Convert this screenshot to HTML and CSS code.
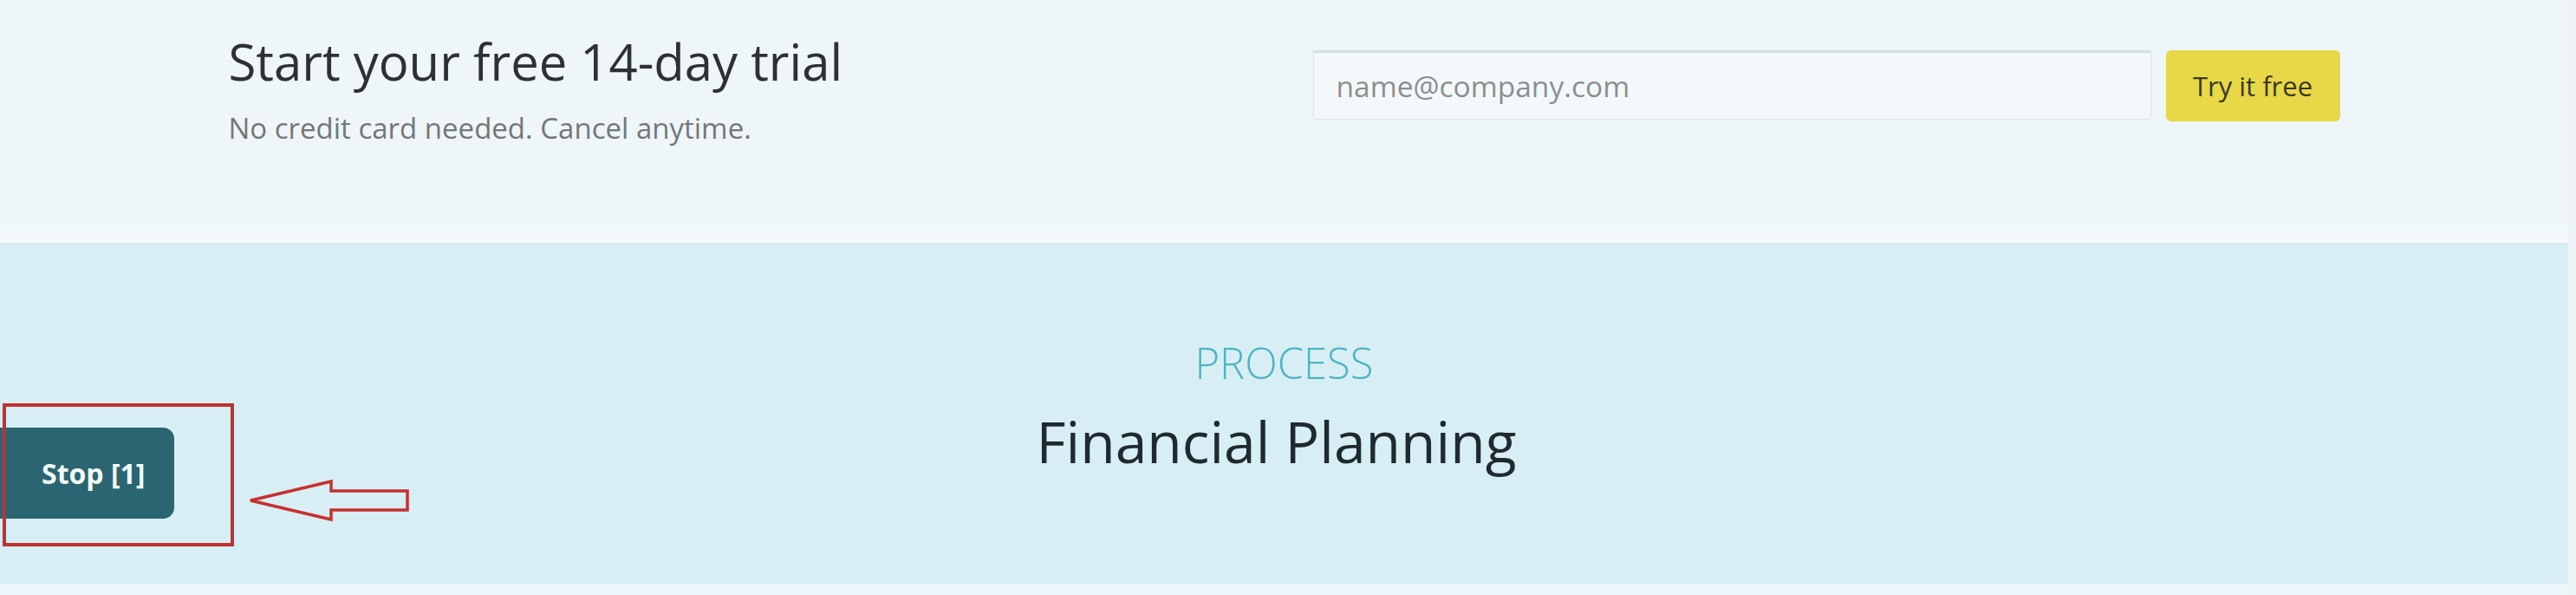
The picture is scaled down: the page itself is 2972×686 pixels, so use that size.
FILE: index.html
```html
<!DOCTYPE html>
<html lang="en">
<head>
<meta charset="utf-8">
<title>Start your free 14-day trial</title>
<link rel="stylesheet" href="styles.css">
</head>
<body>
  <div class="page">
    <section class="trial">
      <div class="trial-inner">
        <div class="trial-text">
          <h2 class="trial-title">Start your free 14-day trial</h2>
          <p class="trial-sub">No credit card needed. Cancel anytime.</p>
        </div>
        <form class="trial-form">
          <input class="trial-input" type="email" placeholder="name@company.com">
          <button class="trial-btn" type="button">Try it free</button>
        </form>
      </div>
    </section>
    <section class="process">
      <div class="process-label">PROCESS</div>
      <h2 class="process-title">Financial Planning</h2>
    </section>
    <div class="bottom-strip"></div>
  </div>
  <div class="edge"></div>

  <button class="stop-btn" type="button">Stop [1]</button>
  <div class="annot-box"></div>
  <svg class="annot-arrow" width="190" height="52" viewBox="0 0 190 52" xmlns="http://www.w3.org/2000/svg">
    <polygon points="3,25 96,3 96,14 184,14 184,36 96,36 96,47" fill="none" stroke="#c8302f" stroke-width="3.5" stroke-linejoin="miter"/>
  </svg>
</body>
</html>
```

FILE: styles.css
```css
html, body {
  margin: 0;
  padding: 0;
}

body {
  position: relative;
  display: flex;
  width: 2972px;
  height: 686px;
  overflow: hidden;
  font-family: "Open Sans", "Noto Sans", "Liberation Sans", sans-serif;
  background: #eef7fa;
}

.page {
  flex: 1;
  display: flex;
  flex-direction: column;
}

.edge {
  width: 9px;
  background: #edf3f5;
}

/* Trial band */
.trial {
  height: 280px;
  background: linear-gradient(to bottom, #eef6f9 0, #eef6f9 248px, #f3f9fc 276px, #f3f9fc 280px);
}

.trial-inner {
  width: 2436px;
  margin: 0 auto;
  padding-top: 36px;
  display: flex;
  justify-content: space-between;
  align-items: flex-start;
}

.trial-title {
  margin: 0;
  font-size: 58px;
  line-height: 70px;
  font-weight: 400;
  color: #2e3132;
}

.trial-sub {
  margin: 20px 0 0;
  font-size: 33px;
  line-height: 44px;
  color: #747778;
}

.trial-form {
  margin: 22px 0 0;
  display: flex;
  gap: 17px;
  align-items: flex-start;
}

.trial-input {
  box-sizing: border-box;
  width: 967px;
  height: 80px;
  padding: 0 0 0 26px;
  border: 1px solid #dce4e7;
  border-top: 3px solid #d8dfe2;
  border-radius: 2px;
  background: #f3f9fb;
  font-family: inherit;
  font-size: 33.5px;
  color: #555;
  outline: none;
}

.trial-input::placeholder {
  color: #8b8f91;
}

.trial-btn {
  width: 201px;
  height: 82px;
  border: none;
  border-radius: 6px;
  background: #e8d848;
  font-family: inherit;
  font-size: 31px;
  font-weight: 500;
  color: #3a3920;
  cursor: pointer;
}

/* Process band */
.process {
  height: 393px;
  box-sizing: border-box;
  padding-top: 108px;
  background: #d7eff4;
  text-align: center;
}

.process-label {
  font-size: 49px;
  line-height: 60px;
  font-weight: 300;
  color: #4fb4c2;
}

.process-title {
  margin: 20px 0 0;
  padding-right: 18px;
  font-size: 66px;
  line-height: 80px;
  font-weight: 400;
  color: #1f2a30;
}

.bottom-strip {
  flex: 1;
  background: #eef7fb;
}

/* Floating recorder control and annotation overlay */
.stop-btn {
  position: absolute;
  left: 0;
  top: 493px;
  width: 201px;
  height: 105px;
  box-sizing: border-box;
  padding: 0 0 0 48px;
  border: none;
  border-radius: 0 13px 13px 0;
  background: #2b6571;
  color: #f2fafa;
  font-family: "Open Sans", "Noto Sans", sans-serif;
  font-size: 32px;
  font-weight: 700;
  text-align: left;
}

.annot-box {
  position: absolute;
  left: 3px;
  top: 465px;
  width: 267px;
  height: 165px;
  box-sizing: border-box;
  border: 4px solid #c2302f;
}

.annot-arrow {
  position: absolute;
  left: 286px;
  top: 552px;
}
```
